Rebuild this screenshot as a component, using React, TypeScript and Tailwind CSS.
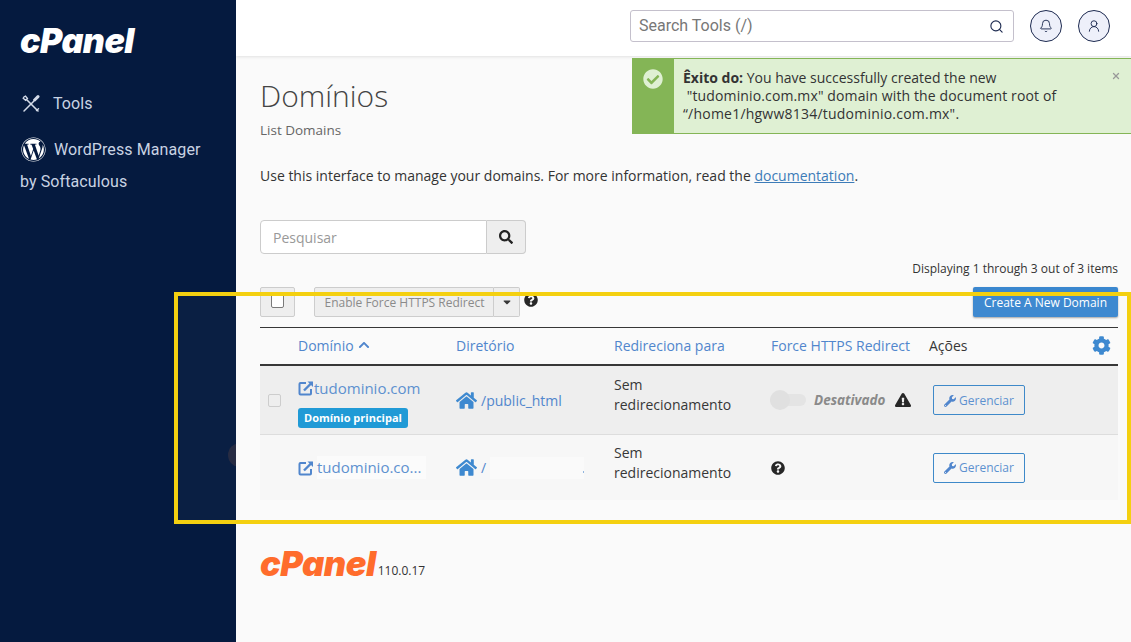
import { Bell, Search, UserRound, X } from 'lucide-react';
import {
  FaCaretDown,
  FaCheckCircle,
  FaChevronUp,
  FaCog,
  FaExclamationTriangle,
  FaHome,
  FaQuestionCircle,
  FaSearch,
  FaWordpress,
  FaWrench,
} from 'react-icons/fa';

function ExternalIcon() {
  return (
    <svg viewBox="0 0 16 16" className="h-[16px] w-[16px] shrink-0 text-[#4d84cc]" fill="none" stroke="currentColor" strokeWidth="2">
      <path d="M8 3H2.5A1 1 0 0 0 1.5 4v9.5a1 1 0 0 0 1 1H12a1 1 0 0 0 1-1V9" />
      <path d="M6 10.5 14 2.5" strokeWidth="2.4" />
      <path d="M9.5 1.5h5.5V7z" fill="currentColor" stroke="none" />
    </svg>
  );
}

function ToolsIcon() {
  return (
    <svg viewBox="0 0 18 18" className="h-[18px] w-[18px]" fill="none" stroke="#d3dae8" strokeLinecap="round">
      <path d="M5 5 16 16" strokeWidth="1.6" />
      <path d="M14.5 15.5 16.5 13.8" strokeWidth="1.4" />
      <path d="M1.2 3.2 3.6 5.2 5.4 3.4 3.4 1.1A3.2 3.2 0 0 0 1.2 3.2z" strokeWidth="1.4" />
      <path d="M11.5 6.5 2 16" strokeWidth="1.5" />
      <path d="M16 1.6 12.6 5" strokeWidth="3" />
    </svg>
  );
}

function Logo({ className }: { className: string }) {
  return (
    <span className={`font-['Inter',sans-serif] font-black italic leading-none tracking-[-0.5px] ${className}`}>cPanel</span>
  );
}

function ManageButton() {
  return (
    <button className="flex h-[30px] w-[92px] items-center justify-center gap-[3px] rounded-[2px] border border-[#3a87c8] pt-[1px] text-[12px] text-[#5a8fcf]">
      <FaWrench className="h-[12px] w-[12px] text-[#4d84cc]" />
      Gerenciar
    </button>
  );
}

function NoRedirect() {
  return (
    <div className="w-[157px] pb-[10px] text-[14px] leading-[20px] text-[#333]">
      Sem
      <br />
      redirecionamento
    </div>
  );
}

export default function App() {
  return (
    <div className="relative flex h-[642px] w-[1131px] overflow-hidden bg-[#fafafa] font-['Open_Sans',sans-serif] text-[#333]">
      <aside className="relative w-[236px] shrink-0 overflow-hidden bg-[#051a3f] pl-[20px] pt-[24px] font-['Roboto',sans-serif] text-[16px] tracking-[0.1px] text-[#c9d3e3]">
        <Logo className="block text-[34px] text-white" />
        <div className="mt-[34px] flex h-[24px] items-center gap-[13px] pl-[2px]">
          <ToolsIcon />
          <span>Tools</span>
        </div>
        <div className="mt-[21px] flex h-[25px] items-center gap-[8px] pl-[1px]">
          <FaWordpress className="h-[25px] w-[25px] text-white" />
          <span>WordPress Manager</span>
        </div>
        <div className="mt-[8px]">by Softaculous</div>
        <span className="absolute left-[228px] top-[443px] h-[24px] w-[24px] rounded-full bg-[#22273f]" />
      </aside>

      <main className="min-w-0 flex-1">
        <header className="flex h-[56px] items-start justify-end gap-[16px] bg-white pr-[21px] pt-[10px] shadow-[0_1px_3px_rgba(0,0,0,0.1)]">
          <div className="flex h-[32px] w-[384px] items-center justify-between rounded-[3px] border border-[#c4c0cc] bg-white pl-[8px] pr-[9px] font-['Roboto',sans-serif] text-[16px] text-[#777]">
            Search Tools (/)
            <Search className="h-[15px] w-[15px] text-[#1d2a50]" strokeWidth={1.8} />
          </div>
          <div className="flex h-[32px] w-[32px] items-center justify-center rounded-full border border-[#1d2a50] bg-[#eef0fa]">
            <Bell className="h-[14px] w-[14px] text-[#1d2a50]" strokeWidth={1.6} />
          </div>
          <div className="flex h-[32px] w-[32px] items-center justify-center rounded-full border border-[#1d2a50] bg-[#eef0fa]">
            <UserRound className="h-[14px] w-[14px] text-[#1d2a50]" strokeWidth={1.6} />
          </div>
        </header>

        <div className="pl-[24px] pr-[13px]">
          <h1 className="pt-[21px] font-['Open_Sans',sans-serif] text-[30px] font-light leading-[38px] text-[#444]">Domínios</h1>
          <div className="mt-[5px] text-[13.5px] leading-[20px] text-[#666]">List Domains</div>
          <p className="mt-[26px] text-[14px] leading-[20px] text-[#333]">
            Use this interface to manage your domains. For more information, read the{' '}
            <span className="text-[#3d7cb8] underline">documentation</span>.
          </p>

          <div className="mt-[34px] flex h-[34px] w-[266px]">
            <div className="flex flex-1 items-center rounded-l-[4px] border border-[#ccc] bg-white pl-[12px] text-[14px] text-[#999]">Pesquisar</div>
            <div className="flex w-[39px] items-center justify-center rounded-r-[4px] border border-l-0 border-[#ccc] bg-[#eee]">
              <FaSearch className="h-[14px] w-[14px] text-[#222]" />
            </div>
          </div>

          <div className="mt-[6px] text-right text-[12px] leading-[18px] text-[#333]">Displaying 1 through 3 out of 3 items</div>

          <div className="mt-[9px] flex h-[31px] items-start">
            <div className="flex h-[30px] w-[35px] items-center justify-center rounded-[2px] border border-[#ccc] bg-[#eee]">
              <span className="mb-[3px] h-[14px] w-[13px] rounded-[2px] border border-[#777] bg-white" />
            </div>
            <div className="ml-[19px] flex h-[30px] w-[180px] items-center justify-center rounded-l-[2px] border border-[#ccc] bg-[#eee] pl-[1px] pt-[2px] text-[12px] text-[#888]">
              Enable Force HTTPS Redirect
            </div>
            <div className="flex h-[30px] w-[26px] items-center justify-center rounded-r-[2px] border border-l-0 border-[#ccc] bg-[#eee]">
              <FaCaretDown className="h-[12px] w-[12px] text-[#333]" />
            </div>
            <FaQuestionCircle className="ml-[4px] mt-[6px] h-[14px] w-[14px] text-[#222]" />
            <button className="ml-auto h-[30px] w-[145px] rounded-[2px] bg-[#3a87cf] pt-[2px] text-[12px] text-white shadow-[0_1px_2px_rgba(0,0,0,0.35)]">
              Create A New Domain
            </button>
          </div>

          <div className="mt-[9px] grid h-[39px] grid-cols-[38px_158px_158px_157px_158px_189px] items-center border-b-2 border-t border-b-[#333] border-t-[#333] pb-[2px] text-[14px] text-[#4d84cc]">
            <span />
            <span className="flex items-center gap-[4px]">
              Domínio <FaChevronUp className="h-[12px] w-[12px]" />
            </span>
            <span>Diretório</span>
            <span>Redireciona para</span>
            <span>Force HTTPS Redirect</span>
            <span className="flex items-center justify-between pr-[7px] text-[#333]">
              Ações
              <FaCog className="h-[19px] w-[19px] text-[#3a87cf]" />
            </span>
          </div>

          <div className="grid h-[69px] grid-cols-[38px_158px_158px_157px_158px_189px] items-center border-b border-[#ddd] bg-[#eee] text-[14px]">
            <span className="ml-[8px] h-[13px] w-[13px] rounded-[2px] border border-[#ccc] bg-[#eee]" />
            <div className="pt-[6px]">
              <div className="flex h-[20px] items-center text-[15px] text-[#5a8fcf]">
                <ExternalIcon />
                tudominio.com
              </div>
              <div className="mt-[10px] h-[20px] w-fit rounded-[3px] bg-[#1b98d5] px-[6px] text-[11px] font-bold leading-[20px] text-white">
                Domínio principal
              </div>
            </div>
            <div className="flex items-center gap-[4px] text-[#4d84cc]">
              <FaHome className="h-[21px] w-[21px] text-[#3a87cf]" />
              /public_html
            </div>
            <NoRedirect />
            <div className="-ml-[1px] flex items-center">
              <span className="relative h-[12px] w-[36px] rounded-full bg-[#e4e4e4]">
                <span className="absolute -top-[4px] left-0 h-[20px] w-[20px] rounded-full bg-[#e0e0e0]" />
              </span>
              <span className="ml-[8px] text-[13.5px] font-bold italic text-[#888]">Desativado</span>
              <FaExclamationTriangle className="ml-[10px] h-[16px] w-[16px] text-[#222]" />
            </div>
            <div className="pl-[4px]">
              <ManageButton />
            </div>
          </div>

          <div className="grid h-[65px] grid-cols-[38px_158px_158px_157px_158px_189px] items-center bg-[#f7f7f7] text-[14px]">
            <span />
            <div className="flex items-center gap-[3px] text-[15px] text-[#5a8fcf]">
              <ExternalIcon />
              <span className="bg-[#fbfbfb] pr-[5px]">tudominio.co...</span>
            </div>
            <div className="flex items-center gap-[4px] text-[#4d84cc]">
              <FaHome className="h-[21px] w-[21px] text-[#3a87cf]" />/
              <span className="flex h-[22px] w-[94px] items-end justify-end bg-[#fafafa] pb-[6px]">
                <span className="h-[2px] w-[1px] bg-[#8fb4de]" />
              </span>
            </div>
            <NoRedirect />
            <FaQuestionCircle className="h-[14px] w-[14px] text-[#222]" />
            <div className="pl-[4px]">
              <ManageButton />
            </div>
          </div>

          <div className="mt-[47px] flex items-end gap-[2px]">
            <Logo className="text-[34.5px] text-[#ff6c2c]" />
            <span className="mb-[2px] text-[12px] text-[#333]">110.0.17</span>
          </div>
        </div>
      </main>

      {/* success notice sits over the page */}
      <div className="absolute left-[632px] top-[58px] flex h-[76px] w-[499px] border-y border-[#84b556] bg-[#dff0d3]">
        <div className="flex w-[42px] justify-center bg-[#84b556] pt-[10px]">
          <FaCheckCircle className="h-[20px] w-[20px] text-[#dff0d3]" />
        </div>
        <div className="pl-[9px] pt-[10px] text-[14px] leading-[18px] text-[#333]">
          <b>Êxito do:</b> You have successfully created the new
          <br />
          <span className="tracking-[0.13px]">&nbsp;"tudominio.com.mx" domain with the document root of</span>
          <br />
          <span className="tracking-[0.22px]">“/home1/hgww8134/tudominio.com.mx".</span>
        </div>
        <X className="absolute right-[10px] top-[12px] h-[10px] w-[10px] text-[#999]" strokeWidth={3} />
      </div>

      {/* yellow highlight drawn on top of the screenshot */}
      <div className="pointer-events-none absolute left-[174px] top-[292px] h-[232px] w-[957px] border-[4px] border-[#f4d010] bg-white/[0.025]" />
    </div>
  );
}
